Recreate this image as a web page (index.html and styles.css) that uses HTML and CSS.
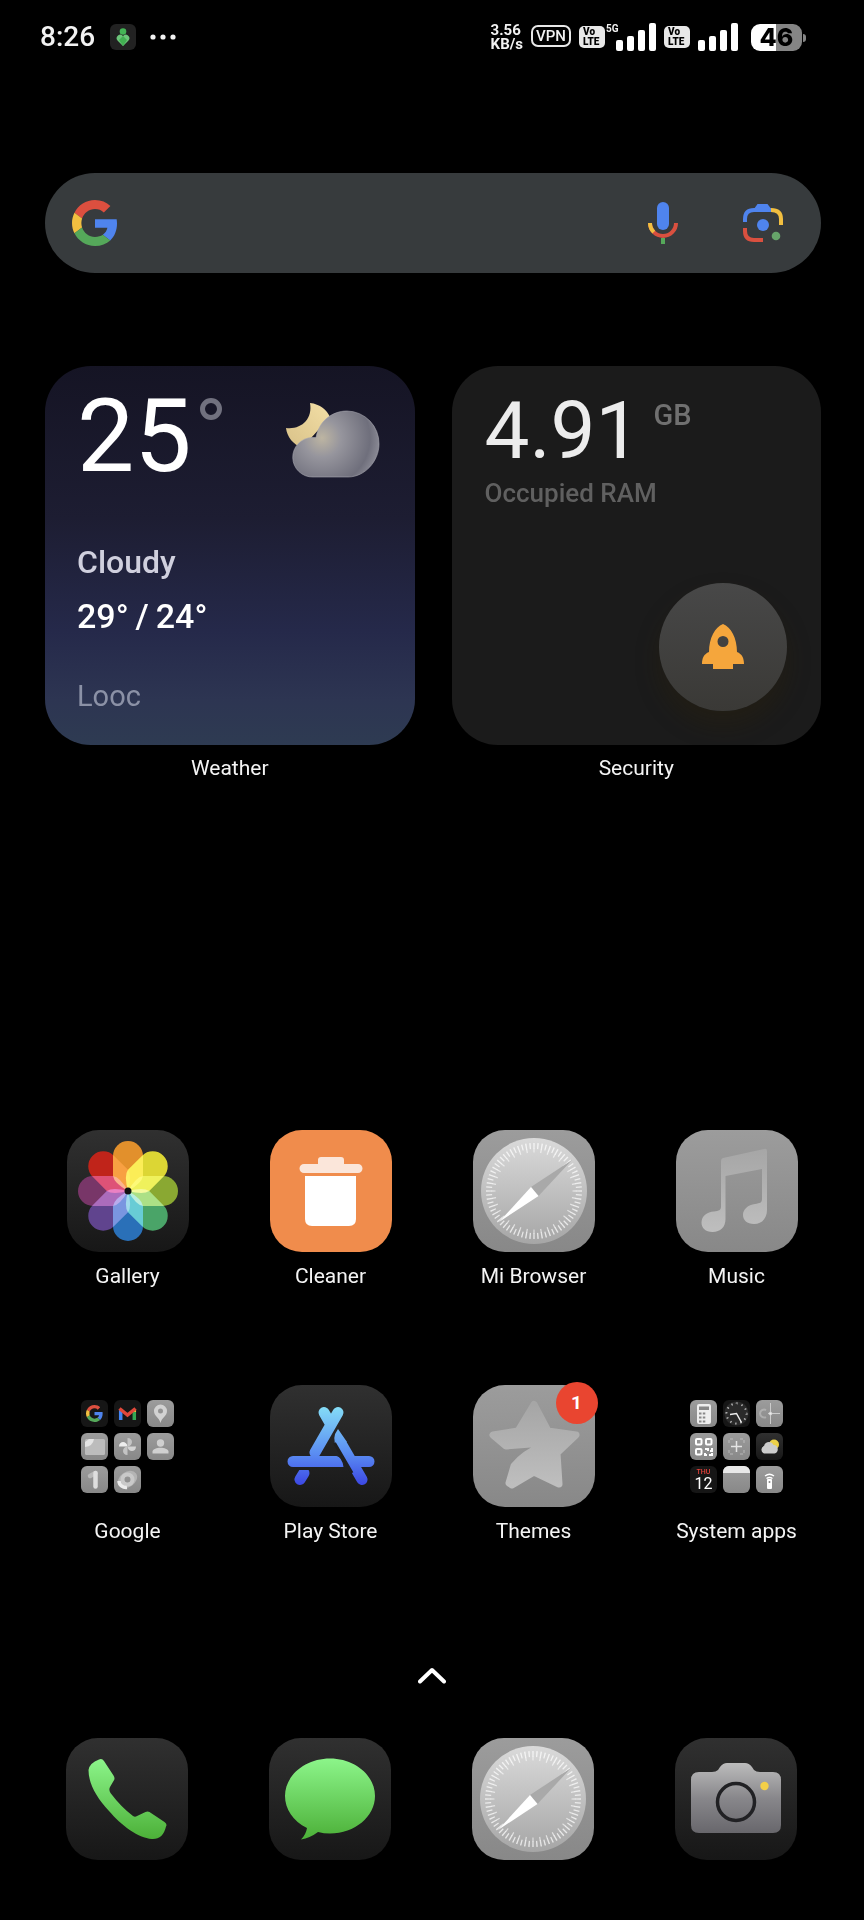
FILE: index.html
```html
<!DOCTYPE html>
<html lang="en">
<head>
<meta charset="utf-8">
<meta name="viewport" content="width=device-width, initial-scale=1">
<title>Home screen</title>
<link rel="stylesheet" href="styles.css">
</head>
<body>
<svg class="defs" aria-hidden="true">
  <defs>
    <linearGradient id="disk" x1="0" y1="0" x2="0" y2="1"><stop offset="0" stop-color="#dadada"/><stop offset="1" stop-color="#a6a6a6"/></linearGradient>
    <linearGradient id="green" x1="0" y1="0" x2="0" y2="1"><stop offset="0" stop-color="#8cf58a"/><stop offset="1" stop-color="#4cb038"/></linearGradient>
    <linearGradient id="store" gradientUnits="userSpaceOnUse" x1="0" y1="22" x2="0" y2="100"><stop offset="0" stop-color="#84dcf6"/><stop offset=".6" stop-color="#5a8cf2"/><stop offset="1" stop-color="#3c48e4"/></linearGradient>
    <linearGradient id="cam" x1="0" y1="0" x2="0" y2="1"><stop offset="0" stop-color="#bcbcbc"/><stop offset=".5" stop-color="#88878b"/><stop offset="1" stop-color="#68676c"/></linearGradient>
    <linearGradient id="note" x1="0" y1="0" x2="0" y2="1"><stop offset="0" stop-color="#a6a6a6"/><stop offset="1" stop-color="#bebebe"/></linearGradient>
    <linearGradient id="moon" x1="1" y1="0" x2="0" y2="1"><stop offset="0" stop-color="#f3dfa6"/><stop offset="1" stop-color="#d8c188"/></linearGradient>
    <radialGradient id="cloud" gradientUnits="userSpaceOnUse" cx="40" cy="40" r="64"><stop offset="0" stop-color="#bdb5a2"/><stop offset=".3" stop-color="#96959d"/><stop offset=".75" stop-color="#6f6f7c"/><stop offset="1" stop-color="#9a9aa4"/></radialGradient>
    <symbol id="g" viewBox="0 0 48 48">
      <path fill="#dc4f3f" d="M24 9.5c3.54 0 6.71 1.22 9.21 3.6l6.85-6.85C35.9 2.38 30.47 0 24 0 14.62 0 6.51 5.38 2.56 13.22l7.98 6.19C12.43 13.72 17.74 9.5 24 9.5z"/>
      <path fill="#4f84ee" d="M46.98 24.55c0-1.57-.15-3.09-.38-4.55H24v9.02h12.94c-.58 2.96-2.26 5.48-4.78 7.18l7.73 6c4.51-4.18 7.09-10.36 7.09-17.65z"/>
      <path fill="#f2bf40" d="M10.53 28.59c-.48-1.45-.76-2.99-.76-4.59s.27-3.14.76-4.59l-7.98-6.19C.92 16.46 0 20.12 0 24c0 3.88.92 7.54 2.56 10.78l7.97-6.19z"/>
      <path fill="#55a85a" d="M24 48c6.48 0 11.93-2.13 15.89-5.81l-7.73-6c-2.15 1.45-4.92 2.3-8.16 2.3-6.26 0-11.57-4.22-13.47-9.91l-7.98 6.19C6.51 42.62 14.62 48 24 48z"/>
    </symbol>
    <symbol id="compass" viewBox="0 0 122 122">
      <circle cx="61" cy="61" r="53" fill="url(#disk)"/>
      <circle cx="61" cy="61" r="45" fill="none" stroke="#fff" stroke-opacity=".7" stroke-width="6" pathLength="144" stroke-dasharray=".7 1.3" stroke-dashoffset=".35"/>
      <circle cx="61" cy="61" r="40.500" fill="none" stroke="#fff" stroke-opacity=".6" stroke-width="4" pathLength="144" stroke-dasharray=".7 3.3" stroke-dashoffset=".35"/>
      <path fill="#a9a9a9" d="M58 57 99 30 65.500 66z"/>
      <path fill="#fff" d="M58 57 65.500 66 26 92z"/>
    </symbol>
    <symbol id="signal" viewBox="0 0 40 28">
      <rect x="0" y="17" width="7" height="11" rx="2"/><rect x="11" y="13" width="7" height="15" rx="2"/><rect x="22" y="7" width="7" height="21" rx="2"/><rect x="33" y="0" width="7" height="28" rx="2"/>
    </symbol>
    <symbol id="petal" viewBox="0 0 122 122" overflow="visible"><path d="M46 26a15 15 0 0 1 30 0V46Q75 53 61 61 47 53 46 46z"/></symbol>
  </defs>
</svg>

<header class="status">
  <div class="status-side">
    <time class="clock">8:26</time>
    <svg class="health" viewBox="0 0 26 26" role="img" aria-label="Health"><rect width="26" height="26" rx="6" fill="#222"/><circle cx="13" cy="7.500" r="3.300" fill="#44b556"/><path fill="#6cc67a" d="M13 22 7.500 16.500a3.500 3.500 0 0 1 5.500-4.500 3.500 3.500 0 0 1 5.500 4.500z"/><path fill="#42b052" d="M13 22 9 16l4-4 4 4z"/></svg>
    <svg class="more" viewBox="0 0 26 6" role="img" aria-label="More notifications"><circle cx="3" cy="3" r="2.600"/><circle cx="13" cy="3" r="2.600"/><circle cx="23" cy="3" r="2.600"/></svg>
  </div>
  <div class="status-side status-right">
    <div class="speed"><div>3.56</div><div>KB/s</div></div>
    <span class="vpn">VPN</span>
    <span class="volte">Vo<br>LTE</span>
    <span class="network"><span class="gen">5G</span><svg class="signal" aria-hidden="true"><use href="#signal"/></svg></span>
    <span class="volte">Vo<br>LTE</span>
    <svg class="signal" aria-hidden="true"><use href="#signal"/></svg>
    <span class="battery">46</span>
  </div>
</header>

<main class="home">
  <form class="search" role="search">
    <svg class="logo" role="img" aria-label="Google"><use href="#g"/></svg>
    <input class="query" type="text" aria-label="Search">
    <button class="tool" type="button" aria-label="Voice search">
      <svg class="mic" viewBox="0 0 30 42"><rect x="9" width="12" height="28" rx="6" fill="#4f84ee"/><path fill="none" stroke="#d9503f" stroke-width="4" d="M2 21a13 13 0 0 0 26 0"/><path fill="none" stroke="#f2bf40" stroke-width="4" d="M2 21a13 13 0 0 0 3.800 9.200"/><path stroke="#55a85a" stroke-width="4" d="M15 36v6"/></svg>
    </button>
    <button class="tool" type="button" aria-label="Search with camera">
      <svg class="lens" viewBox="0 0 40 38" fill="none" stroke-width="4"><path stroke="#4f84ee" d="M2 18v-3q0-9 9-9h17"/><path fill="#4f84ee" d="M11 5 14.500 0h10L29 6v2H11z"/><path stroke="#f2bf40" d="M28 6q10 0 10 9v6"/><path stroke="#d9503f" d="M2 24v3q0 9 9 9h9"/><circle cx="20" cy="21" r="6" fill="#4f84ee"/><circle cx="33" cy="32" r="4.300" fill="#66a46a"/></svg>
    </button>
  </form>

  <section class="widgets" aria-label="Widgets">
    <a class="widget" href="#weather">
      <div class="card weather">
        <div class="weather-top">
          <span class="temp">25</span><i class="degree"></i>
          <svg class="sky" viewBox="0 0 100 84" aria-hidden="true">
            <path fill="url(#moon)" d="M28 5c10 1 17 7 20 14L20 50C11 46 5 39 4 30c15 2 27-9 24-25z"/>
            <path fill="url(#cloud)" stroke="#a9a8b0" stroke-opacity=".6" d="M31 79a19.500 19.500 0 0 1-1-39.500h4C37 23 50 13 65 13a32.500 32.500 0 0 1 32 33c0 17-14 33-31 33z"/>
          </svg>
        </div>
        <span class="condition">Cloudy</span>
        <span class="range">29°&#8201;/&#8201;24°</span>
        <span class="place">Looc</span>
      </div>
      <span class="label">Weather</span>
    </a>
    <div class="widget">
      <div class="card security">
        <div class="ram"><span class="amount">4.91</span><span class="unit">GB</span></div>
        <span class="ram-label">Occupied RAM</span>
        <button class="boost" type="button" aria-label="Boost">
          <svg class="rocket" viewBox="0 0 42 46"><path fill="#f5a63c" fill-rule="evenodd" d="M21 0c8 3 14 14 14 28 5 2 7 6 7 12H31v5H11v-5H0c0-6 2-10 7-12C7 14 13 3 21 0zm0 12a5.500 5.500 0 1 0 0 11 5.500 5.500 0 0 0 0-11z"/></svg>
        </button>
      </div>
      <span class="label">Security</span>
    </div>
  </section>

  <nav class="apps" aria-label="Apps">
    <a class="app" href="#gallery">
      <svg class="icon dark" viewBox="0 0 122 122">
        <g class="flower">
          <use href="#petal" fill="#e2902c"/>
          <use href="#petal" fill="#dcd634" transform="rotate(45 61 61)"/>
          <use href="#petal" fill="#8aa832" transform="rotate(90 61 61)"/>
          <use href="#petal" fill="#4aa468" transform="rotate(135 61 61)"/>
          <use href="#petal" fill="#2a70b8" transform="rotate(180 61 61)"/>
          <use href="#petal" fill="#60448e" transform="rotate(225 61 61)"/>
          <use href="#petal" fill="#783668" transform="rotate(270 61 61)"/>
          <use href="#petal" fill="#c0241a" transform="rotate(315 61 61)"/>
        </g>
        <circle cx="61" cy="61" r="3.500" fill="#111"/>
      </svg>
      <span class="label">Gallery</span>
    </a>
    <a class="app" href="#cleaner">
      <svg class="icon orange" viewBox="0 0 122 122"><path fill="#fbe6da" d="M48 34v-4q0-3 3-3h20q3 0 3 3v4h14a4.500 4.500 0 0 1 0 9H34a4.500 4.500 0 0 1 0-9z"/><path fill="#fff" d="M35 46h51v43q0 7-7 7H42q-7 0-7-7z"/></svg>
      <span class="label">Cleaner</span>
    </a>
    <a class="app" href="#browser">
      <svg class="icon grey"><use href="#compass"/></svg>
      <span class="label">Mi Browser</span>
    </a>
    <a class="app" href="#music">
      <svg class="icon grey" viewBox="0 0 122 122"><path fill="url(#note)" d="M47 28 88 19q3-1 3 2v59c0 8-5 14-13 14-7 0-11-4-11-9 0-6 5-10 12-11 5-1 7-1 7-5V39L49.500 46v43c0 8-5 13-13 13-7 0-11-4-11-9.500C25.500 86 31 82 38 81.500c5-.5 7-1.500 7-5V31q0-2.500 2-3z"/></svg>
      <span class="label">Music</span>
    </a>

    <button class="app" type="button">
      <span class="icon folder">
        <svg class="mini black" viewBox="0 0 27 27"><use href="#g" x="5" y="5" width="17" height="17"/></svg>
        <svg class="mini black" viewBox="0 0 27 27" fill="none" stroke-width="3.500"><path stroke="#4285f4" d="M6.700 20V9"/><path stroke="#34a853" d="M20.300 20V9"/><path stroke="#f2bf40" d="M20.300 12V9"/><path stroke="#e0483a" d="m5.500 8.500 8 6.500 8-6.500"/></svg>
        <svg class="mini grey" viewBox="0 0 27 27"><path fill="#d2d2d2" fill-rule="evenodd" d="M13.500 4.500a6.500 6.500 0 0 1 6.500 6.500c0 5-5 6-6.500 12C12 17 7 16 7 11a6.500 6.500 0 0 1 6.500-6.500zm0 4a2.500 2.500 0 1 0 0 5 2.500 2.500 0 0 0 0-5z"/></svg>
        <svg class="mini grey" viewBox="0 0 27 27"><rect x="4" y="6" width="20" height="16" rx="1.500" fill="#bcbcbc"/><path fill="#e4e4e4" d="M4 13V9l4-3h5q-1 7-9 8z"/></svg>
        <svg class="mini grey" viewBox="0 0 27 27"><path fill="#eee" d="M13.500 13.500H5c0-6 8-6 8.500 0z"/><path fill="#c4c4c4" d="M13.500 13.500V5c6 0 6 8 0 8.500zM13.500 13.500v8.500c-6 0-6-8 0-8.500z"/><path fill="#d4d4d4" d="M13.500 13.500H22c0 6-8 6-8.500 0z"/></svg>
        <svg class="mini grey" viewBox="0 0 27 27" fill="#d0d0d0"><circle cx="13.500" cy="10" r="3.700"/><path d="M5.500 20.500v-2c1-5 15-5 16 0v2z"/></svg>
        <svg class="mini grey" viewBox="0 0 27 27" fill="none" stroke-width="4.500" stroke-linecap="round"><path stroke="#b9b9b9" d="m9 10 5.500-3"/><path stroke="#dedede" d="M14.500 7v13.500"/></svg>
        <svg class="mini grey" viewBox="0 0 27 27" fill="none" stroke-width="4"><ellipse cx="13.500" cy="13.500" rx="8.500" ry="5.500" stroke="#b4b4b4" transform="rotate(-35 13.500 13.500)"/><circle cx="13.500" cy="13.500" r="5" stroke="#c9c9c9"/><path stroke="#ececec" stroke-width="3.500" d="M5 15c0 4 4 7 8 6.500"/></svg>
      </span>
      <span class="label">Google</span>
    </button>
    <a class="app" href="#play-store">
      <svg class="icon dark" viewBox="0 0 122 122" fill="none" stroke="url(#store)" stroke-width="11" stroke-linecap="round">
        <path d="m68 27.500-23 40M54 27.500l6 10.500M23 76.500h42M92 94.500 72 60M84 76.500h15M34 88l-4 6.500"/>
        <path stroke="none" fill="url(#store)" d="M38 71h28q6 1 7.500 11H38zM68 44l9 13-10 6q-6-10 1-19z"/>
        <path stroke="#1f1f1f" stroke-width="3" stroke-linecap="butt" d="M64.500 58 82 88M28 83.500h14"/>
      </svg>
      <span class="label">Play Store</span>
    </a>
    <a class="app" href="#themes">
      <span class="badged">
        <svg class="icon grey" viewBox="0 0 122 122"><path fill="url(#note)" stroke="url(#note)" stroke-width="7" stroke-linejoin="round" d="M61 19.500 75 46l28 4-19 18 2 31-25-12-22 13-3-2 5-17q10-13 30-20.500L64 58.500 33 61 20 50l25-4z"/></svg>
        <span class="badge">1</span>
      </span>
      <span class="label">Themes</span>
    </a>
    <button class="app" type="button">
      <span class="icon folder">
        <svg class="mini grey" viewBox="0 0 27 27"><rect x="7" y="4" width="14" height="20" rx="2" fill="#eee"/><path fill="#888" d="M9 6.500h10v3.500H9z"/><path stroke="#888" stroke-width="2" stroke-dasharray="2.500 1.300" d="M9 13.500h7M9 17.500h7M9 21.500h7"/></svg>
        <svg class="mini black" viewBox="0 0 27 27" fill="none"><circle cx="13.500" cy="13.500" r="12" fill="#2a2a2a"/><circle cx="13.500" cy="13.500" r="10" stroke="#bbb" stroke-width="2" pathLength="48" stroke-dasharray="1 3"/><path stroke="#eee" stroke-width="1.500" d="m7 14.500 6.500-1 5 9"/></svg>
        <svg class="mini grey" viewBox="0 0 27 27" fill="none" stroke="#ccc"><path d="M10 10a4 4 0 1 0 0 7" stroke-width="2" opacity=".5"/><path d="M14.500 3v21M12 13.500h12"/><circle cx="14.500" cy="13.500" r="1.500" fill="#eee"/></svg>
        <svg class="mini grey" viewBox="0 0 27 27" fill="none" stroke="#fff" stroke-width="2"><rect x="6" y="6" width="5.500" height="5.500" rx="1"/><rect x="16" y="6" width="5.500" height="5.500" rx="1"/><rect x="6" y="16" width="5.500" height="5.500" rx="1"/><path d="M15 16h3v2M22 15v3h-2M15 20v2h2M19 22h3v-2"/></svg>
        <svg class="mini grey" viewBox="0 0 27 27" fill="none" stroke="#e4e4e4"><path stroke-width="1.500" d="M13.500 8v11M8 13.500h11"/><path opacity=".5" stroke-dasharray="3 2" d="M6 10V6h4M17 6h4v4M21 17v4h-4M10 21H6v-4"/></svg>
        <svg class="mini dark" viewBox="0 0 27 27"><circle cx="18" cy="11.500" r="5" fill="#ecd048"/><path fill="#ccc" d="M8 20.500a4 4 0 0 1 0-7.500c1-5 8-5 9.500-1 5-1 6 8 1 8.500z"/></svg>
        <span class="mini black calendar"><span class="weekday">THU</span><span class="day">12</span></span>
        <svg class="mini grey" viewBox="0 0 27 27"><path fill="#e8e8e8" d="M0 0h27v7H0z"/></svg>
        <svg class="mini grey" viewBox="0 0 27 27"><rect x="11" y="13" width="5" height="10" rx="1" fill="#fff"/><circle cx="13.500" cy="16" r="1" fill="#888"/><path fill="none" stroke="#fff" stroke-width="1.300" d="M9 10q4.500-3.500 9 0M10.500 12.500q3-2 6 0"/></svg>
      </span>
      <span class="label">System apps</span>
    </button>
  </nav>

  <button class="drawer" type="button" aria-label="All apps">
    <svg class="chevron" viewBox="0 0 28 17" fill="none" stroke="#fff" stroke-width="4" stroke-linecap="round" stroke-linejoin="round"><path d="M2 14.500 14 3l12 11.500"/></svg>
  </button>

  <nav class="dock" aria-label="Dock">
    <a class="app" href="#phone" aria-label="Phone"><svg class="icon dark" viewBox="0 0 122 122"><path fill="url(#green)" d="M33 21.500q3-1.500 5 1.500l9.500 14.500q2 3 0 5.500L44 49q-1.500 3 .5 6Q55 69 67 78q1.500 1 3 .5l9.500-4.500q2-1 4 0l15 10q3 2 1.500 4.500-3 13-14 12.500c-14-1-31-14-43-28C31 60 22.500 46 22.500 32q1-7 10.500-10.500z"/></svg></a>
    <a class="app" href="#messages" aria-label="Messages"><svg class="icon dark" viewBox="0 0 122 122"><path fill="url(#green)" d="M61 20.500c25 0 45 17 45 37.500S86 95.500 61 95.500q-6 0-12-1.500-8 6-17 7.500 5-5 6-11.500C24 83 16 71 16 58c0-20.500 20-37.500 45-37.500z"/></svg></a>
    <a class="app" href="#browser" aria-label="Mi Browser"><svg class="icon grey"><use href="#compass"/></svg></a>
    <a class="app" href="#camera" aria-label="Camera"><svg class="icon dark" viewBox="0 0 122 122"><path fill="url(#cam)" d="M24 34h13q4 0 6-2l2-3q3-4 7-4h18q4 0 7 4l2 3q2 2 6 2h13q8 0 8 8v45q0 8-8 8H24q-8 0-8-8V42q0-8 8-8z"/><circle cx="61" cy="64" r="18.500" fill="none" stroke="#212124" stroke-width="3.500"/><circle cx="89.500" cy="48" r="4.200" fill="#f3cf48"/></svg></a>
  </nav>
</main>
</body>
</html>
```
FILE: styles.css
```css
* { box-sizing: border-box; }

body {
  margin: 0;
  min-height: 100vh;
  display: flex;
  flex-direction: column;
  background: #000;
  color: #f2f2f2;
  font-family: Roboto, "Liberation Sans", sans-serif;
}

svg { display: block; flex: none; }

a { color: inherit; text-decoration: none; }

button {
  border: 0;
  padding: 0;
  background: none;
  color: inherit;
  font: inherit;
  cursor: pointer;
}

.defs { position: absolute; width: 0; height: 0; }

/* Status bar */
.status {
  display: flex;
  justify-content: space-between;
  align-items: center;
  padding: 20px 62px 0 40px;
}

.status-side { display: flex; align-items: center; }
.status-right { gap: 8px; }

.clock { font-size: 28px; line-height: 34px; font-weight: 500; }
.health { width: 26px; height: 26px; margin-left: 15px; }
.more { width: 26px; height: 6px; margin-left: 14px; fill: #f2f2f2; }

.speed { font-size: 15px; line-height: 14px; font-weight: 700; }

.vpn {
  width: 40px;
  margin-bottom: 3px;
  border: 2px solid #e8e8e8;
  border-radius: 7px;
  text-align: center;
  font-size: 15px;
  line-height: 18px;
  font-weight: 500;
}

.volte {
  width: 26px;
  padding: 1px 0 1px 4px;
  border-radius: 5px;
  background: #e8e8e8;
  color: #000;
  font-size: 10px;
  line-height: 10px;
  font-weight: 900;
}

.network { position: relative; padding-left: 3px; }
.gen {
  position: absolute;
  left: -7px;
  top: 0;
  font-size: 10px;
  line-height: 12px;
  font-weight: 700;
}
.signal { width: 40px; height: 28px; fill: #fff; }

.battery {
  position: relative;
  width: 51px;
  margin-left: 5px;
  border-radius: 9px;
  background: linear-gradient(90deg, #fff 50%, #858585 50%);
  color: #000;
  text-align: center;
  font-family: Inter, Roboto, sans-serif;
  font-size: 25px;
  line-height: 27px;
  font-weight: 800;
}
.battery::after {
  content: "";
  position: absolute;
  left: 100%;
  top: 10px;
  width: 3px;
  height: 8px;
  margin-left: 1px;
  border-radius: 0 4px 4px 0;
  background: #858585;
}

.home { flex: 1; display: flex; flex-direction: column; }

/* Search */
.search {
  display: flex;
  align-items: center;
  margin: 119px 43px 0 45px;
  padding: 0 28px 0 27px;
  min-height: 100px;
  border-radius: 50px;
  background: #373b3d;
}
.logo { width: 46px; height: 46px; }
.query {
  flex: 1;
  min-width: 0;
  border: 0;
  outline: 0;
  background: none;
  color: inherit;
  font: 28px Roboto, sans-serif;
}
.tool { display: grid; place-items: center; width: 60px; height: 60px; margin-left: 40px; }
.mic { width: 30px; height: 42px; }
.lens { width: 40px; height: 38px; }

/* Widgets */
.widgets {
  display: grid;
  grid-template-columns: 1fr 1fr;
  gap: 37px;
  margin: 93px 43px 0 45px;
}
.widget { display: flex; flex-direction: column; gap: 10px; }
.card { flex: 1; display: flex; flex-direction: column; border-radius: 46px; }

.label {
  color: #f4f4f4;
  text-align: center;
  font-size: 21px;
  line-height: 26px;
}

.weather {
  padding: 18px 33px 31px 32px;
  background: linear-gradient(#151424, #1d1d32 40%, #25294a 70%, #2d3552 88%, #2e3b52);
}
.weather-top { display: flex; align-items: flex-start; }
.temp { color: #fff; font-size: 102px; line-height: 104px; }
.degree {
  width: 22px;
  height: 22px;
  margin: 14px 0 0 8px;
  border: 5px solid #71717f;
  border-radius: 50%;
}
.sky { width: 100px; height: 84px; margin: 14px 0 0 auto; }
.condition, .range { font-size: 32px; line-height: 40px; font-weight: 500; }
.condition { margin-top: 54px; color: #d0d0de; }
.range { margin-top: 14px; color: #fff; font-size: 34px; }
.place { margin-top: 42px; color: #8b91a6; font-size: 29px; line-height: 36px; }

.security { padding: 25px 34px 34px 33px; background: #1b1b1b; }
.ram { display: flex; align-items: flex-start; gap: 13px; }
.amount { color: #ececec; font-size: 80px; line-height: 80px; }
.unit { margin-top: 8px; color: #707070; font-size: 29px; line-height: 32px; font-weight: 500; }
.ram-label { margin-top: 6px; color: #606060; font-size: 26px; line-height: 32px; font-weight: 500; }
.boost {
  display: grid;
  place-items: center;
  align-self: flex-end;
  width: 128px;
  height: 128px;
  margin-top: auto;
  border-radius: 50%;
  background: linear-gradient(#484848, #3a3936);
  box-shadow: 0 14px 24px rgba(50, 36, 8, .3);
}
.rocket { width: 42px; height: 46px; }

/* Apps */
.apps, .dock { display: grid; grid-template-columns: repeat(4, 1fr); }
.apps { row-gap: 96px; margin-top: auto; padding: 0 26px; }
.dock { margin-top: 54px; padding: 0 27px 60px 25px; }
.app { display: flex; flex-direction: column; align-items: center; gap: 11px; }

.icon { width: 122px; height: 122px; border-radius: 32px; }
.dark { background: linear-gradient(#303030, #171717); }
.grey { background: linear-gradient(#9c9c9c, #888); }
.orange { background: #f08c4c; }
.black { background: #161616; }

.flower { isolation: isolate; }
.flower use { mix-blend-mode: screen; }

.folder {
  display: grid;
  grid-template-columns: repeat(3, 27px);
  grid-auto-rows: 27px;
  gap: 6px;
  place-content: center;
}
.mini { width: 27px; height: 27px; border-radius: 6px; }
.calendar { display: flex; flex-direction: column; align-items: center; padding-top: 3px; }
.weekday { color: #e8423a; font-size: 7px; line-height: 7px; font-weight: 500; }
.day { color: #fff; font-size: 16px; line-height: 15px; }

.badged { position: relative; }
.badge {
  position: absolute;
  top: -3px;
  right: -3px;
  width: 42px;
  border-radius: 50%;
  background: #e94530;
  color: #fff;
  text-align: center;
  font-size: 19px;
  line-height: 42px;
  font-weight: 700;
}

.drawer { align-self: center; margin-top: 113px; padding: 10px 18px 0; }
.chevron { width: 28px; height: 17px; }
```
